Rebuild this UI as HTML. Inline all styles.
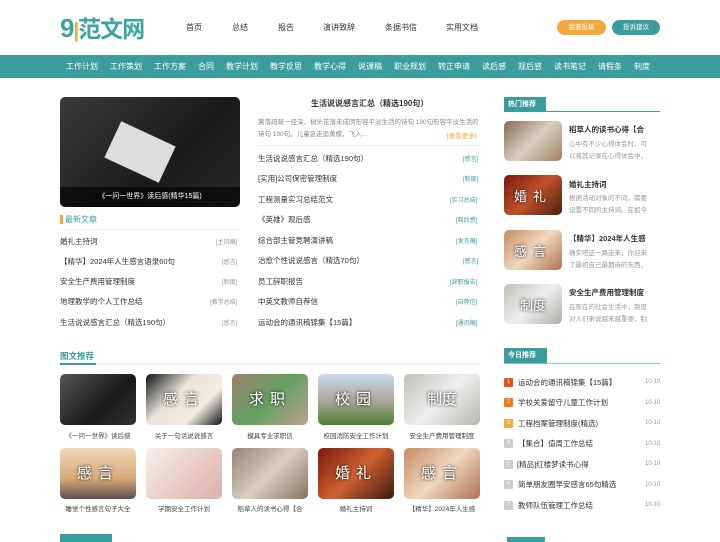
<!DOCTYPE html>
<html><head><meta charset="utf-8"><style>
*{margin:0;padding:0;box-sizing:border-box}
body{width:720px;height:540px;overflow:hidden;background:#fff;font-family:"Liberation Sans","Noto Sans CJK SC",sans-serif;color:#333;position:relative}
.a{position:absolute;white-space:nowrap}
.t{color:#3a9c9c}
.nav{font-size:8px;color:#333}
.bar{position:absolute;left:0;top:55px;width:720px;height:23px;background:#3a9e9e}
.bar span{position:absolute;top:6px;font-size:8px;color:#fff}
.img{position:absolute;border-radius:5px;overflow:hidden}
.li{font-size:7.5px;color:#333}
.tg{font-size:6px;color:#3a9c9c}
.tg2{font-size:6px;color:#999}
.cap{position:absolute;font-size:6.5px;color:#444;width:80px;text-align:center}
.ov{position:absolute;width:100%;top:14px;text-align:center;color:#fff;font-size:15px;text-shadow:0 0 3px #000;letter-spacing:6px}
.num{position:absolute;width:9px;height:9px;font-size:5px;color:#fff;text-align:center;line-height:9px;border-radius:1px}
</style></head><body>
<div class="a" style="left:60px;top:10px;font-size:26px;font-weight:bold;color:#3aa5a0;letter-spacing:-1px">9<span style="color:#f4a73a;font-size:20px">|</span><span style="font-size:23px">范文网</span></div>
<span class="a nav" style="left:186px;top:22px">首页</span>
<span class="a nav" style="left:232px;top:22px">总结</span>
<span class="a nav" style="left:278px;top:22px">报告</span>
<span class="a nav" style="left:323px;top:22px">演讲致辞</span>
<span class="a nav" style="left:385px;top:22px">条据书信</span>
<span class="a nav" style="left:446px;top:22px">实用文档</span>
<div class="a" style="left:557px;top:20px;width:49px;height:15px;border-radius:8px;background:#f4a73a;color:#fff;font-size:6.5px;text-align:center;line-height:15px">我要投稿</div>
<div class="a" style="left:612px;top:20px;width:48px;height:15px;border-radius:8px;background:#3a9c9c;color:#fff;font-size:6.5px;text-align:center;line-height:15px">投诉建议</div>
<div class="bar">
<span style="left:66px">工作计划</span><span style="left:110px">工作策划</span><span style="left:154px">工作方案</span><span style="left:198px">合同</span><span style="left:226px">教学计划</span><span style="left:270px">教学反思</span><span style="left:314px">教学心得</span><span style="left:358px">说课稿</span><span style="left:394px">职业规划</span><span style="left:438px">转正申请</span><span style="left:482px">读后感</span><span style="left:518px">观后感</span><span style="left:554px">读书笔记</span><span style="left:598px">请假条</span><span style="left:634px">制度</span>
</div>
<div class="img" style="left:60px;top:97px;width:180px;height:110px;background:linear-gradient(135deg,#3a3a3a,#1a1a1a 60%,#2a2a2a)">
<div style="position:absolute;left:50px;top:35px;width:60px;height:40px;background:#ddd;transform:rotate(25deg)"></div>
<div style="position:absolute;bottom:0;width:100%;height:20px;background:rgba(0,0,0,.6);color:#fff;font-size:7px;text-align:center;line-height:20px">《一问一世界》读后感(精华15篇)</div></div>
<div class="a" style="left:60px;top:215px;width:3px;height:9px;background:#f4a73a"></div>
<span class="a t" style="left:65px;top:214px;font-size:8px">最新文章</span>
<div class="a" style="left:60px;top:229px;width:180px;height:1px;background:#f0f0f0"></div>
<span class="a li" style="left:60px;top:236px">婚礼主持词</span><span class="a tg2" style="left:216px;top:237px">[主持稿]</span>
<span class="a li" style="left:60px;top:256px">【精华】2024年人生感言语录60句</span><span class="a tg2" style="left:222px;top:257px">[感言]</span>
<span class="a li" style="left:60px;top:276px">安全生产费用管理制度</span><span class="a tg2" style="left:222px;top:277px">[制度]</span>
<span class="a li" style="left:60px;top:296px">地理教学的个人工作总结</span><span class="a tg2" style="left:210px;top:297px">[教学总结]</span>
<span class="a li" style="left:60px;top:317px">生活说说感言汇总（精选190句）</span><span class="a tg2" style="left:222px;top:318px">[感言]</span>
<span class="a" style="left:311px;top:98px;font-size:8px;font-weight:bold">生活说说感言汇总（精选190句）</span>
<div class="a" style="left:258px;top:117px;width:222px;font-size:6.5px;color:#888;line-height:12px;white-space:normal">篱落疏疏一径深，树头花落未成阴形容平淡生活的诗句 190句形容平淡生活的诗句 190句。儿童急走追黄蝶，飞入...</div>
<span class="a" style="left:447px;top:130px;font-size:6.5px;color:#f4a73a">[查看更多]</span>
<div class="a" style="left:258px;top:145px;width:222px;height:1px;background:#eee"></div>
<span class="a li" style="left:258px;top:153px">生活说说感言汇总（精选190句）</span><span class="a tg" style="left:463px;top:154px">[感言]</span>
<span class="a li" style="left:258px;top:173px">[实用]公司保密管理制度</span><span class="a tg" style="left:463px;top:174px">[制度]</span>
<span class="a li" style="left:258px;top:194px">工程测量实习总结范文</span><span class="a tg" style="left:450px;top:195px">[实习总结]</span>
<span class="a li" style="left:258px;top:214px">《英雄》观后感</span><span class="a tg" style="left:456px;top:215px">[观后感]</span>
<span class="a li" style="left:258px;top:235px">综合部主管竞聘演讲稿</span><span class="a tg" style="left:456px;top:236px">[发言稿]</span>
<span class="a li" style="left:258px;top:255px">治愈个性说说感言（精选70句）</span><span class="a tg" style="left:463px;top:256px">[感言]</span>
<span class="a li" style="left:258px;top:276px">员工辞职报告</span><span class="a tg" style="left:450px;top:277px">[辞职报告]</span>
<span class="a li" style="left:258px;top:296px">中英文教师自荐信</span><span class="a tg" style="left:456px;top:297px">[自荐信]</span>
<span class="a li" style="left:258px;top:317px">运动会的通讯稿锦集【15篇】</span><span class="a tg" style="left:456px;top:318px">[通讯稿]</span>
<div class="a" style="left:504px;top:97px;width:42px;height:15px;background:#3a9c9c;color:#fff;font-size:7px;font-weight:bold;line-height:15px;padding-left:4px">热门推荐</div>
<div class="a" style="left:504px;top:111px;width:156px;height:1px;background:#3a9c9c"></div>
<div class="img" style="left:504px;top:121px;width:58px;height:40px;background:linear-gradient(135deg,#8a6a50,#d8cfc0 50%,#a08060)"></div>
<span class="a" style="left:569px;top:124px;font-size:7.5px;font-weight:bold">稻草人的读书心得【合</span>
<span class="a" style="left:569px;top:139px;font-size:6.5px;color:#999;line-height:12px">心中有不少心得体会时，可<br>以将其记录在心得体会中，</span>
<div class="img" style="left:504px;top:175px;width:58px;height:40px;background:linear-gradient(135deg,#7a1a0a,#c0502a 50%,#4a2010)"><div class="ov" style="top:11px;font-size:13px">婚礼</div></div>
<span class="a" style="left:569px;top:179px;font-size:7.5px;font-weight:bold">婚礼主持词</span>
<span class="a" style="left:569px;top:193px;font-size:6.5px;color:#999;line-height:12px">根据活动对象的不同，需要<br>设置不同的主持词。在如今</span>
<div class="img" style="left:504px;top:230px;width:58px;height:40px;background:linear-gradient(135deg,#c98a60,#f0d8c0 50%,#b07050)"><div class="ov" style="top:11px;font-size:13px">感言</div></div>
<span class="a" style="left:569px;top:233px;font-size:7.5px;font-weight:bold">【精华】2024年人生感</span>
<span class="a" style="left:569px;top:248px;font-size:6.5px;color:#999;line-height:12px">确实吧这一路走来，你迎来<br>了最初自己最期待的东西，</span>
<div class="img" style="left:504px;top:284px;width:58px;height:40px;background:linear-gradient(135deg,#c0c0b8,#eee 50%,#b0b0a8)"><div class="ov" style="top:11px;font-size:13px;letter-spacing:0">制度</div></div>
<span class="a" style="left:569px;top:287px;font-size:7.5px;font-weight:bold">安全生产费用管理制度</span>
<span class="a" style="left:569px;top:302px;font-size:6.5px;color:#999;line-height:12px">在现在的社会生活中，制度<br>对人们来说越来越重要，制</span>
<div class="a" style="left:504px;top:348px;width:43px;height:16px;background:#3a9c9c;color:#fff;font-size:7px;font-weight:bold;line-height:16px;padding-left:4px">今日推荐</div>
<div class="a" style="left:504px;top:363px;width:156px;height:1px;background:#8cc5c5"></div>
<div class="num" style="left:504px;top:378px;background:#e8501a">1</div><span class="a li" style="left:518px;top:377px">运动会的通讯稿锦集【15篇】</span><span class="a tg2" style="left:645px;top:379px">10-10</span>
<div class="num" style="left:504px;top:398px;background:#f07a1a">2</div><span class="a li" style="left:518px;top:397px">学校关爱留守儿童工作计划</span><span class="a tg2" style="left:645px;top:400px">10-10</span>
<div class="num" style="left:504px;top:419px;background:#f4a73a">3</div><span class="a li" style="left:518px;top:418px">工程档案管理制度(精选)</span><span class="a tg2" style="left:645px;top:420px">10-10</span>
<div class="num" style="left:504px;top:439px;background:#ccc">4</div><span class="a li" style="left:518px;top:438px">【集合】值周工作总结</span><span class="a tg2" style="left:645px;top:441px">10-10</span>
<div class="num" style="left:504px;top:460px;background:#ccc">5</div><span class="a li" style="left:517px;top:459px">[精品]红楼梦读书心得</span><span class="a tg2" style="left:645px;top:461px">10-10</span>
<div class="num" style="left:504px;top:480px;background:#ccc">6</div><span class="a li" style="left:518px;top:479px">简单朋友圈早安感言65句精选</span><span class="a tg2" style="left:645px;top:482px">10-10</span>
<div class="num" style="left:504px;top:501px;background:#ccc">7</div><span class="a li" style="left:518px;top:500px">教师队伍管理工作总结</span><span class="a tg2" style="left:645px;top:502px">10-10</span>
<div class="a" style="left:507px;top:537px;width:38px;height:5px;background:#3a9c9c"></div>
<span class="a t" style="left:60px;top:350px;font-size:8.5px;font-weight:bold">图文推荐</span>
<div class="a" style="left:60px;top:363px;width:420px;height:2px;background:#f3f3f3"></div>
<div class="a" style="left:60px;top:363px;width:36px;height:2px;background:#3a9c9c"></div>
<div class="img" style="left:60px;top:374px;width:76px;height:51px;background:linear-gradient(135deg,#555,#1a1a1a 60%,#333)"></div>
<div class="img" style="left:146px;top:374px;width:76px;height:51px;background:linear-gradient(135deg,#111,#e8e4dc 40%,#f0ece4 70%,#111)"><div class="ov">感言</div></div>
<div class="img" style="left:232px;top:374px;width:76px;height:51px;background:linear-gradient(135deg,#a08070,#60a060 50%,#c0a090)"><div class="ov">求职</div></div>
<div class="img" style="left:318px;top:374px;width:76px;height:51px;background:linear-gradient(180deg,#c8d8e8,#b0a8a0 50%,#508030)"><div class="ov">校园</div></div>
<div class="img" style="left:404px;top:374px;width:76px;height:51px;background:linear-gradient(135deg,#c0c0b8,#eee 50%,#b8b8b0)"><div class="ov" style="letter-spacing:0">制度</div></div>
<div class="cap" style="left:58px;top:430px">《一问一世界》读后感</div>
<div class="cap" style="left:144px;top:430px">关于一句话说说感言</div>
<div class="cap" style="left:230px;top:430px">模具专业求职信</div>
<div class="cap" style="left:316px;top:430px">校园消防安全工作计划</div>
<div class="cap" style="left:402px;top:430px">安全生产费用管理制度</div>
<div class="img" style="left:60px;top:448px;width:76px;height:51px;background:linear-gradient(180deg,#f0d8b8,#d8a878 60%,#605050)"><div class="ov">感言</div></div>
<div class="img" style="left:146px;top:448px;width:76px;height:51px;background:linear-gradient(135deg,#f4f0ec,#e8c8c0 60%,#d8b0b0)"></div>
<div class="img" style="left:232px;top:448px;width:76px;height:51px;background:linear-gradient(135deg,#9a8070,#d8d0c0 50%,#8a7060)"></div>
<div class="img" style="left:318px;top:448px;width:76px;height:51px;background:linear-gradient(135deg,#7a1a0a,#d06030 50%,#3a1a10)"><div class="ov">婚礼</div></div>
<div class="img" style="left:404px;top:448px;width:76px;height:51px;background:linear-gradient(135deg,#c98a60,#f0d8c0 50%,#b07050)"><div class="ov">感言</div></div>
<div class="cap" style="left:58px;top:503px">睡觉个性感言句子大全</div>
<div class="cap" style="left:144px;top:503px">学期安全工作计划</div>
<div class="cap" style="left:230px;top:503px">稻草人的读书心得【合</div>
<div class="cap" style="left:316px;top:503px">婚礼主持词</div>
<div class="cap" style="left:402px;top:503px">【精华】2024年人生感</div>
<div class="a" style="left:60px;top:534px;width:52px;height:8px;background:#3a9c9c"></div>
</body></html>
